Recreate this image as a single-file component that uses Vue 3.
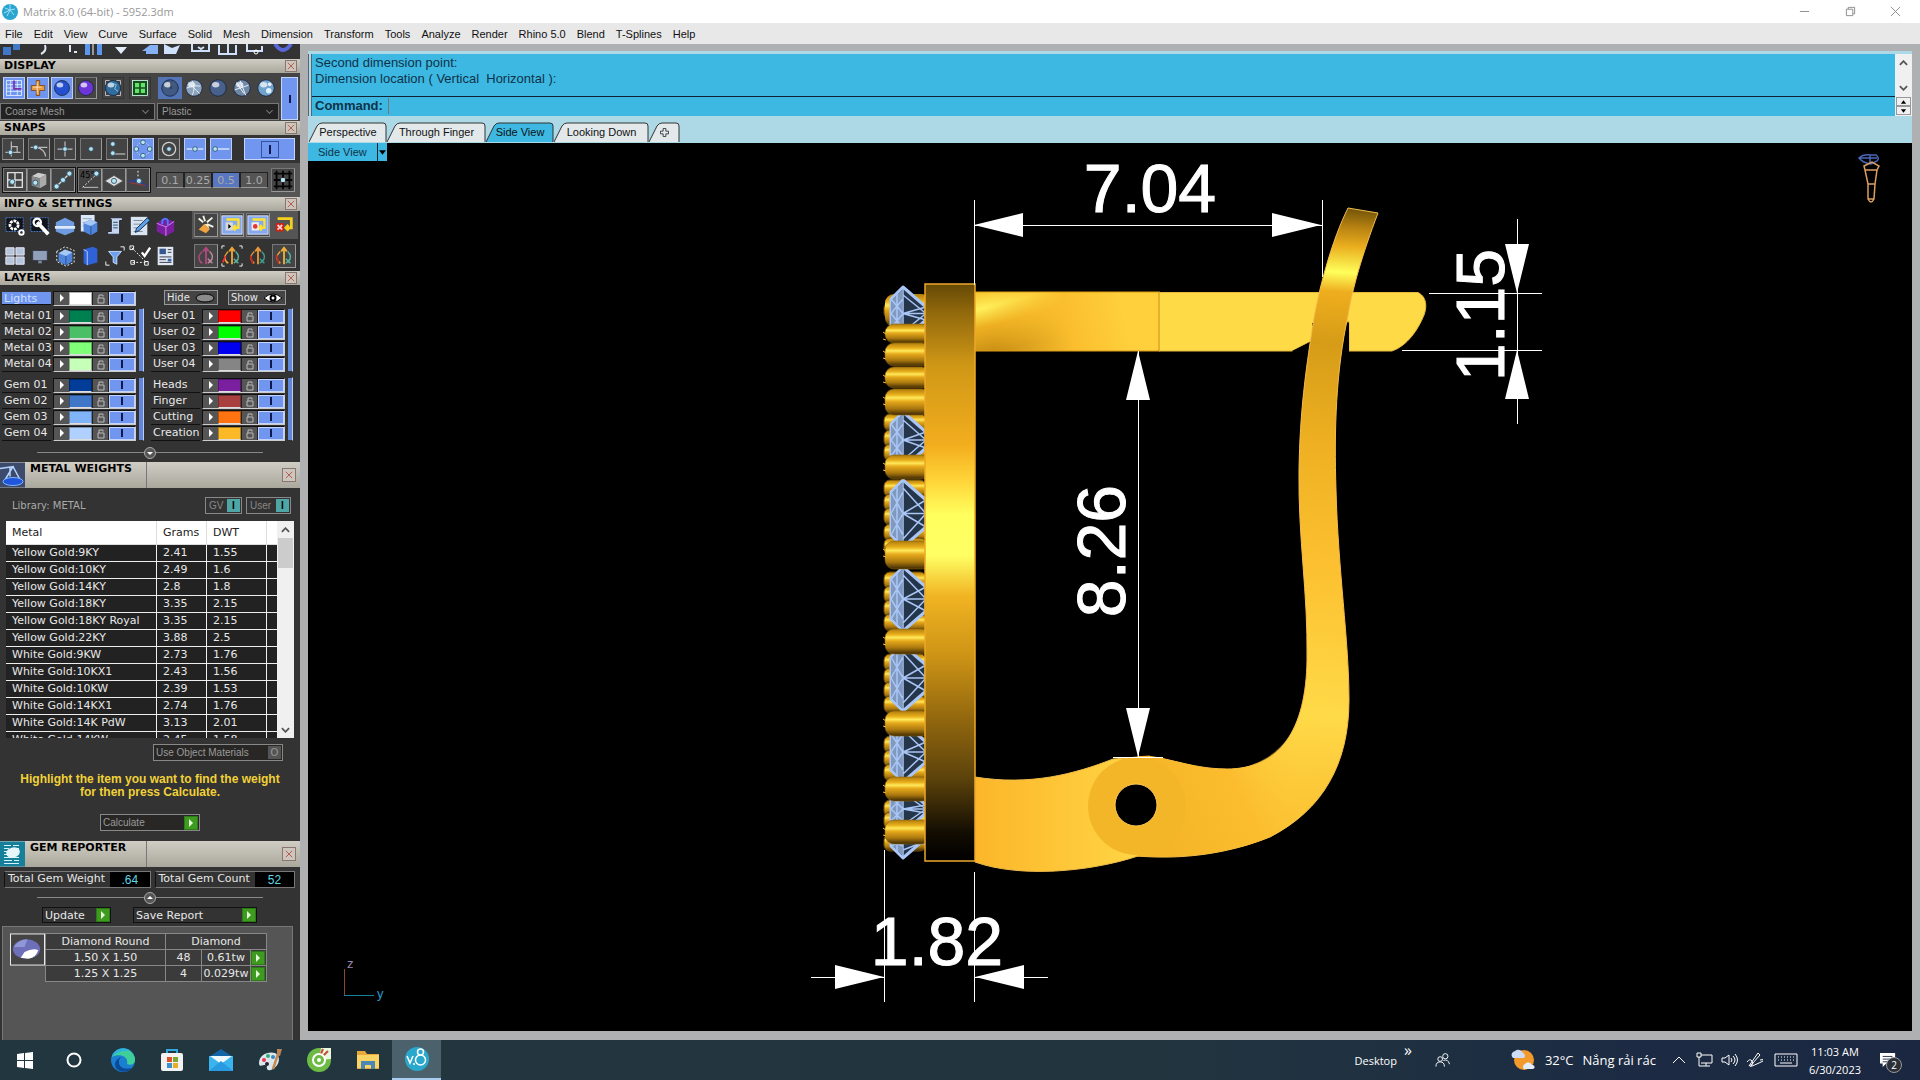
<template>
  <div class="app">
    <header class="titlebar">
      <svg class="logo" viewBox="0 0 18 18"><circle cx="9" cy="9" r="8" fill="#2aa5cf" /><path d="M4 5l5 2 5-1M6 13l3-6 4 5M3 10l6-3M9 1v6" stroke="#9fe0f5" fill="none" /></svg>
      <span class="title">Matrix 8.0 (64-bit) - 5952.3dm</span>
      <div class="window-buttons">
        <button type="button" aria-label="Minimize"><svg viewBox="0 0 12 12"><path d="M1 6h10" /></svg></button>
        <button type="button" aria-label="Restore"><svg viewBox="0 0 12 12"><path d="M1.500 3.500h7v7h-7zM3.500 3.500v-2h7v7h-2" /></svg></button>
        <button type="button" aria-label="Close"><svg viewBox="0 0 12 12"><path d="M1 1l10 10M11 1L1 11" /></svg></button>
      </div>
    </header>

    <nav class="menubar">
      <button v-for="m in menus" :key="m" type="button">{{ m }}</button>
    </nav>

    <div class="body">
      <aside class="sidebar">
        <div class="clipped-tools">
          <svg viewBox="0 0 300 15" v-html="clippedTools"></svg>
        </div>

        <!-- Display -->
        <div class="heading"><h2>DISPLAY</h2><button type="button" class="x" aria-label="Close display"><svg viewBox="0 0 10 10"><path d="M1 1l8 8M9 1L1 9" /></svg></button></div>
        <section class="display">
          <div class="display-col wide">
            <div class="display-icons">
              <button v-for="b in displayTools" :key="b.name" type="button" class="tool" :class="b.look" :aria-label="b.name"><svg viewBox="0 0 24 24" v-html="b.icon"></svg></button>
            </div>
            <select aria-label="Mesh quality"><option>Coarse Mesh</option></select>
          </div>
          <div class="display-col">
            <div class="display-icons spheres">
              <button v-for="(b, i) in spheres" :key="i" type="button" class="tool flat" :class="{ on: i === 0 }" :aria-label="'Shading ' + (i + 1)"><svg viewBox="0 0 24 24" v-html="b"></svg></button>
            </div>
            <select aria-label="Material"><option>Plastic</option></select>
          </div>
          <button type="button" class="toggle tall" aria-label="Toggle shading"></button>
        </section>

        <!-- Snaps -->
        <div class="heading"><h2>SNAPS</h2><button type="button" class="x" aria-label="Close snaps"><svg viewBox="0 0 10 10"><path d="M1 1l8 8M9 1L1 9" /></svg></button></div>
        <section class="snaps">
          <button v-for="b in snaps" :key="b.name" type="button" class="tool" :class="{ on: b.on }" :aria-label="b.name"><svg viewBox="0 0 24 24" v-html="b.icon"></svg></button>
          <button type="button" class="toggle big" aria-label="Toggle snaps"></button>
        </section>
        <section class="grid-snaps">
          <div v-for="(g, i) in gridSnaps" :key="i" class="tool-group">
            <button v-for="(b, k) in g" :key="k" type="button" class="tool" :aria-label="'Grid snap ' + (i * 3 + k + 1)"><svg viewBox="0 0 24 24" v-html="b"></svg></button>
          </div>
          <div class="steps">
            <button v-for="s in ['0.1', '0.25', '0.5', '1.0']" :key="s" type="button" :class="{ on: s === '0.5' }">{{ s }}</button>
          </div>
          <button type="button" class="tool" aria-label="Grid"><svg viewBox="0 0 24 24"><path d="M2 5h20M2 12h20M2 19h20M5 2v20M12 2v20M19 2v20" stroke="#050505" stroke-width="2" fill="none" /><circle cx="12" cy="12" r="2.500" fill="#b9e4f5" /></svg></button>
        </section>

        <!-- Info & settings -->
        <div class="heading"><h2>INFO &amp; SETTINGS</h2><button type="button" class="x" aria-label="Close settings"><svg viewBox="0 0 10 10"><path d="M1 1l8 8M9 1L1 9" /></svg></button></div>
        <section v-for="(row, i) in info" :key="i" class="info-row">
          <div class="info-left">
            <button v-for="(b, k) in row.left" :key="k" type="button" class="tool bare" :aria-label="'Setting ' + (i * 7 + k + 1)"><svg viewBox="0 0 24 24" v-html="b"></svg></button>
          </div>
          <div class="info-right" :class="{ lit: i === 0 }">
            <button v-for="(b, k) in row.right" :key="k" type="button" class="tool" :class="b.look" :aria-label="'History ' + (i * 4 + k + 1)"><svg viewBox="0 0 24 24" v-html="b.icon"></svg></button>
          </div>
        </section>

        <!-- Layers -->
        <div class="heading"><h2>LAYERS</h2><button type="button" class="x" aria-label="Close layers"><svg viewBox="0 0 10 10"><path d="M1 1l8 8M9 1L1 9" /></svg></button></div>
        <section class="layers">
          <div class="layer-block lights">
            <div class="layer">
              <span class="layer-name selected">Lights</span>
              <div class="layer-controls">
                <button type="button" class="play" aria-label="Select Lights"></button>
                <button type="button" class="swatch white" aria-label="Lights colour"></button>
                <button type="button" class="lock" aria-label="Lock Lights"><svg viewBox="0 0 10 12"><path d="M3 6V3h4v1.500M2 6h6v5H2z" /></svg></button>
                <button type="button" class="toggle" aria-label="Toggle Lights"></button>
              </div>
            </div>
            <div class="visibility">
              <button type="button">Hide <svg viewBox="0 0 20 10"><ellipse cx="10" cy="5" rx="9" ry="4" fill="#8b8b8b" stroke="#000" /></svg></button>
              <button type="button">Show <svg viewBox="0 0 20 10"><path d="M1 5q9-8 18 0q-9 8-18 0" fill="#fff" stroke="#000" /><circle cx="10" cy="5" r="2.500" fill="#fff" stroke="#000" stroke-width="2" /></svg></button>
            </div>
          </div>
          <div v-for="(block, i) in layers" :key="i" class="layer-block">
            <div v-for="(col, k) in block" :key="k" class="layer-col">
              <div>
                <div v-for="l in col" :key="l.name" class="layer">
                  <span class="layer-name">{{ l.name }}</span>
                  <div class="layer-controls">
                    <button type="button" class="play" :aria-label="'Select ' + l.name"></button>
                    <button type="button" class="swatch" :style="{ background: l.color }" :aria-label="l.name + ' colour'"></button>
                    <button type="button" class="lock" :aria-label="'Lock ' + l.name"><svg viewBox="0 0 10 12"><path d="M3 6V3h4v1.500M2 6h6v5H2z" /></svg></button>
                    <button type="button" class="toggle" :aria-label="'Toggle ' + l.name"></button>
                  </div>
                </div>
              </div>
              <span class="layer-bar"></span>
            </div>
          </div>
        </section>
        <div class="fold"><button type="button" aria-label="Expand layers"><svg viewBox="0 0 12 12"><circle cx="6" cy="6" r="5.500" fill="#555" stroke="#aaa" /><path d="M3 5h6l-3 3z" fill="#fff" /></svg></button></div>

        <!-- Metal weights -->
        <div class="heading tall-heading">
          <svg class="heading-icon" viewBox="0 0 25 25"><rect width="25" height="25" fill="#3c4a6c" /><path d="M0 6l14-2M13 4L4 19M13 4l8 15M10 4v10" stroke="#b4d4ff" fill="none" stroke-width="1.500" /><ellipse cx="13" cy="19" rx="10" ry="4" fill="#1f56dc" stroke="#7fb4ff" /></svg>
          <h2>METAL WEIGHTS</h2>
          <button type="button" class="x" aria-label="Close metal weights"><svg viewBox="0 0 10 10"><path d="M1 1l8 8M9 1L1 9" /></svg></button>
        </div>
        <section class="metals">
          <div class="library">
            <span>Library: METAL</span>
            <button type="button">GV <b>I</b></button>
            <button type="button">User <b>I</b></button>
          </div>
          <div class="metal-list">
            <table>
              <thead>
                <tr><th>Metal</th><th>Grams</th><th>DWT</th><th></th></tr>
              </thead>
              <tbody>
                <tr v-for="m in metals" :key="m[0]"><td>{{ m[0] }}</td><td>{{ m[1] }}</td><td>{{ m[2] }}</td><td></td></tr>
              </tbody>
            </table>
            <div class="scroll">
              <svg viewBox="0 0 10 6"><path d="M1 5l4-4 4 4" /></svg>
              <span class="thumb"></span>
              <svg viewBox="0 0 10 6"><path d="M1 1l4 4 4-4" /></svg>
            </div>
          </div>
          <button type="button" class="field-button materials">Use Object Materials <i>O</i></button>
          <p class="hint">Highlight the item you want to find the weight<br>for then press Calculate.</p>
          <button type="button" class="field-button calculate">Calculate <span class="go"></span></button>
        </section>

        <!-- Gem reporter -->
        <div class="heading tall-heading">
          <svg class="heading-icon" viewBox="0 0 25 25"><rect width="25" height="25" fill="#167f9a" /><path d="M4 4h7M13 4h6M4 7h5M11 7h8M4 10h15M4 13h15M4 16h15M4 19h8M14 19h5M4 22h15" stroke="#d7f4fb" /><ellipse cx="13" cy="11" rx="7" ry="5" fill="#e6f6fa" transform="rotate(-15 13 11)" /></svg>
          <h2>GEM REPORTER</h2>
          <button type="button" class="x" aria-label="Close gem reporter"><svg viewBox="0 0 10 10"><path d="M1 1l8 8M9 1L1 9" /></svg></button>
        </div>
        <section class="gems">
          <div class="totals">
            <div><span>Total Gem Weight</span><output>.64</output></div>
            <div><span>Total Gem Count</span><output>52</output></div>
          </div>
          <div class="fold"><button type="button" aria-label="Collapse totals"><svg viewBox="0 0 12 12"><circle cx="6" cy="6" r="5.500" fill="#555" stroke="#aaa" /><path d="M3 7h6L6 4z" fill="#fff" /></svg></button></div>
          <div class="gem-actions">
            <button type="button" class="update"><span>Update</span><span class="go"></span></button>
            <button type="button" class="save"><span>Save Report</span><span class="go"></span></button>
          </div>
          <div class="report">
            <svg class="gem-thumb" viewBox="0 0 36 33"><rect x="0.500" y="0.500" width="35" height="32" fill="#444" stroke="#eee" /><ellipse cx="17" cy="16" rx="14" ry="10" fill="#6d70b8" /><path d="M4 14q5-8 14-8l-3 8z" fill="#8f97d8" /><path d="M11 25l4-6q8-4 14-2-2 8-10 9z" fill="#fff" /></svg>
            <table>
              <thead><tr><th>Diamond Round</th><th colspan="3">Diamond</th></tr></thead>
              <tbody>
                <tr v-for="g in gems" :key="g[0]">
                  <td>{{ g[0] }}</td><td>{{ g[1] }}</td><td>{{ g[2] }}</td>
                  <td><button type="button" class="go" :aria-label="'Show ' + g[0]"></button></td>
                </tr>
              </tbody>
            </table>
          </div>
        </section>
      </aside>

      <main class="workspace">
        <section class="command">
          <div class="command-text">
            <p>Second dimension point:</p>
            <p>Dimension location ( Vertical&nbsp; Horizontal ):</p>
            <label class="prompt">Command: <input type="text"></label>
          </div>
          <div class="command-scroll">
            <div class="command-arrows">
              <svg viewBox="0 0 10 6"><path d="M1 5l4-4 4 4" /></svg>
              <svg viewBox="0 0 10 6"><path d="M1 1l4 4 4-4" /></svg>
            </div>
            <button type="button" aria-label="Previous"><svg viewBox="0 0 8 4"><path d="M1 4l3-4 3 4z" /></svg></button>
            <button type="button" aria-label="Next"><svg viewBox="0 0 8 4"><path d="M1 0l3 4 3-4z" /></svg></button>
          </div>
        </section>

        <div class="tabs">
          <button v-for="t in tabs" :key="t.name" type="button" :class="{ active: t.name === 'Side View' }">
            <svg :viewBox="`0 0 ${t.width} 20`" :width="t.width" height="20"><path :d="`M0 20L8 4q2-3 5-3H${t.width - 4}q3 0 3 3V20`" /></svg>
            <span v-if="t.name !== '+'">{{ t.name }}</span>
            <svg v-else class="plus" viewBox="0 0 10 10"><path d="M3.500 .5h3v3h3v3h-3v3h-3v-3h-3v-3h3z" /></svg>
          </button>
        </div>

        <section class="viewport">
          <button type="button" class="view-label">Side View<span><svg viewBox="0 0 8 5"><path d="M0 0h8L4 5z" /></svg></span></button>
          <svg class="scene" viewBox="308 143 1604 888">
            <defs>
              <linearGradient id="bezel" x2="0" y2="1">
                <stop offset="0" stop-color="#654905" /><stop offset=".05" stop-color="#92690c" /><stop offset=".14" stop-color="#cf9716" />
                <stop offset=".28" stop-color="#f3ae1e" /><stop offset=".34" stop-color="#ffd438" /><stop offset=".4" stop-color="#ffff5e" />
                <stop offset=".47" stop-color="#ffff64" /><stop offset=".54" stop-color="#f1b423" /><stop offset=".64" stop-color="#cf9516" />
                <stop offset=".75" stop-color="#94690e" /><stop offset=".86" stop-color="#5a410b" /><stop offset=".95" stop-color="#130d02" /><stop offset="1" stop-color="#000" />
              </linearGradient>
              <linearGradient id="prong" x2="0" y2="1">
                <stop offset="0" stop-color="#b07c0d" /><stop offset=".22" stop-color="#e9b01c" /><stop offset=".34" stop-color="#ffe95a" />
                <stop offset=".48" stop-color="#e6a91b" /><stop offset=".75" stop-color="#aa780f" /><stop offset="1" stop-color="#3d2903" />
              </linearGradient>
              <linearGradient id="post" gradientUnits="userSpaceOnUse" x1="985" y1="292" x2="1000" y2="351">
                <stop offset="0" stop-color="#f9c934" /><stop offset=".25" stop-color="#fff05a" /><stop offset=".55" stop-color="#eeb022" /><stop offset="1" stop-color="#c98f14" />
              </linearGradient>
              <linearGradient id="post-end" gradientUnits="userSpaceOnUse" x1="990" y1="330" x2="1120" y2="300">
                <stop offset="0" stop-color="#f9bd2c" stop-opacity="0" /><stop offset=".6" stop-color="#fbbf2e" /><stop offset="1" stop-color="#ffcf3c" />
              </linearGradient>
              <linearGradient id="arm" x2="1" y2="0"><stop offset="0" stop-color="#fcb62a" /><stop offset="1" stop-color="#ffd746" /></linearGradient>
              <linearGradient id="lever" gradientUnits="userSpaceOnUse" x1="1360" y1="208" x2="1320" y2="860">
                <stop offset="0" stop-color="#6d5208" /><stop offset=".03" stop-color="#b78212" /><stop offset=".06" stop-color="#eaae1e" />
                <stop offset=".1" stop-color="#ffff5c" /><stop offset=".13" stop-color="#eead1e" /><stop offset=".21" stop-color="#d69c17" />
                <stop offset=".36" stop-color="#eeb022" /><stop offset=".55" stop-color="#fcc030" /><stop offset=".78" stop-color="#ffda48" /><stop offset=".93" stop-color="#fbc031" /><stop offset="1" stop-color="#f6b829" />
              </linearGradient>
              <linearGradient id="fade" gradientUnits="userSpaceOnUse" x1="1150" y1="810" x2="1310" y2="740">
                <stop offset="0" stop-color="#f4b528" /><stop offset=".5" stop-color="#fbbc2e" /><stop offset="1" stop-color="#ffd744" stop-opacity="0" />
              </linearGradient>
            </defs>

            <!-- stone setting, back row then front row -->
            <rect v-for="y in backProngs" :key="'b' + y" x="884" :y="y" width="42" height="17" rx="6" fill="url(#prong)" stroke="#6a4a08" />
            <rect x="885" y="294" width="46" height="33" rx="9" fill="url(#prong)" />
            <g v-for="g in stones" :key="'s' + g[0]" fill="none" stroke="#a9c6f7" stroke-width="3" stroke-linejoin="round">
              <path :d="stoneOutline(g)" fill="#26364a" />
              <path :d="stoneTable(g)" fill="#8199bd" stroke="none" />
              <path :d="stoneFacets(g)" stroke-width="1.500" />
            </g>
            <g v-for="p in prongs" :key="'p' + p[0]">
              <rect x="885" :y="p[0]" width="46" :height="p[1] - p[0]" rx="9" fill="url(#prong)" stroke="#8a610a" stroke-width=".6" />
              <path :d="`M883 ${p[0] + 8}l3 2M883 ${p[0] + 15}l3 1`" stroke="#f9bf2b" />
            </g>

            <path d="M975 292H1159V351H975z" fill="url(#post)" />
            <path d="M975 292H1159V351H975z" fill="url(#post-end)" />
            <path d="M1159 292.500H1418C1427 297 1427 307 1424 315C1418 330 1407 346 1392 351H1349V321L1292 351H1159z" fill="#ffda47" stroke="#e7b83e" />
            <path d="M1292 351L1312 341V323H1349V351z" fill="#000" />
            <path d="M1159 292V351M975 292H1160M975 351H1160" stroke="#d99b18" fill="none" />
            <path d="M975 777C1030 786 1075 774 1113 759L1150 756V855L1138 856C1090 872 1020 878 975 862z" fill="url(#arm)" stroke="#efbb49" />
            <path :d="lever" fill="url(#lever)" stroke="#f5bd4b" />
            <path d="M1137 757C1160 753 1187 769 1227 769C1260 769 1285 748 1295 725L1348 725C1345 770 1320 812 1270 837C1235 852 1190 859 1137 856z" fill="url(#fade)" />
            <circle cx="1137" cy="806" r="49" fill="#f4b629" />
            <circle cx="1136" cy="805" r="21" fill="#000" stroke="#ffc955" />
            <rect x="925" y="284" width="50" height="577" fill="url(#bezel)" stroke="#eda829" stroke-width="1.500" />

            <g class="dims">
              <path d="M974.500 200V285M1322.500 200V277M974 225.500H1322M1517.500 219V424M1429 293.500H1542M1402 350.500H1542M1138.500 351V757M1113 757.500H1163M884.500 850V1002M974.500 872V1002M811 977.500H885M975 977.500H1048" />
              <path class="arrow" d="M974 225l49-12v24zM1321 225l-49-12v24zM1517 293l-12-49h24zM1517 350l-12 49h24zM1138 351l-12 49h24zM1138 757l-12-49h24zM884 977l-49-12v24zM975 977l49-12v24z" />
              <text x="1150" y="212">7.04</text>
              <text x="937" y="965">1.82</text>
              <text transform="translate(1125 551) rotate(-90)">8.26</text>
              <text transform="translate(1504 315) rotate(-90)">1.15</text>
            </g>

            <path d="M344.500 969V995" stroke="#8a4a2c" fill="none" />
            <path d="M344 995.500H374" stroke="#1c7f9c" fill="none" />
            <text class="axis" x="347" y="968" fill="#9a86b0">z</text>
            <text class="axis" x="377" y="998" fill="#2a9bd0">y</text>

            <g fill="none" stroke-width="1.500">
              <path d="M1859 158q4-4 12-3h5q4 3 1 6l-6 3q-8-1-12-6zM1860 158h17M1870 155v8" stroke="#4a66b8" />
              <path d="M1864 166l8-4 7 4-2 4-2 14-1 15q-3 6-6 0v-15l-3-14zM1865 170h12M1868 184h7M1868 199h6M1864 166l1 4" stroke="#dc9f60" />
            </g>
          </svg>
        </section>
      </main>
    </div>

    <footer class="taskbar">
      <div class="pinned">
        <button v-for="a in apps" :key="a.name" type="button" :class="{ running: a.name === 'Matrix' }" :aria-label="a.name"><svg viewBox="0 0 24 24" v-html="a.icon"></svg></button>
      </div>
      <div class="tray">
        <span class="desktop">Desktop</span>
        <span class="more">»</span>
        <svg class="people" viewBox="0 0 16 16"><circle cx="5.500" cy="7" r="2.500" /><circle cx="11" cy="4" r="2.800" /><path d="M1 15q0-5 4.500-5t4.500 5M9 8.500q5-2 6.500 4" /></svg>
        <div class="weather">
          <svg viewBox="0 0 26 26"><circle cx="14" cy="13" r="10" fill="#f39a2d" /><path d="M3 11a4 4 0 0 1 2-7 5 5 0 0 1 8 2 3 3 0 0 1 1 5z" fill="#cfdcf5" /><path d="M14 22a3 3 0 0 1 1-5 4 4 0 0 1 7 1 2 2 0 0 1 1 4z" fill="#e3ecfa" /></svg>
          <span>32°C</span><span>Nắng rải rác</span>
        </div>
        <div class="status">
          <svg viewBox="0 0 18 18"><path d="M3 12l6-6 6 6" /></svg>
          <svg viewBox="0 0 18 18"><path d="M6 4h11v8H6M11 12v3M7 15h8M2 2h4v4H2zM4 6v9h3" /></svg>
          <svg viewBox="0 0 18 18"><path d="M2 7v4h3l4 3V4L5 7zM11 7q2 2 0 4M13 5q4 4 0 8M15 3q5 6 0 12" /></svg>
          <svg viewBox="0 0 18 18"><path d="M6 12L13 2l2 2-8 9-3 2zM2 11q3-4 5-1t-1 5 8-3 1-3" /></svg>
          <svg class="keyboard" viewBox="0 0 24 14"><path d="M1 1h22v12H1zM4 4h1M7 4h1M10 4h1M13 4h1M16 4h1M19 4h1M4 7h1M7 7h1M10 7h1M13 7h1M16 7h1M19 7h1M6 10h12" /></svg>
        </div>
        <div class="clock"><time>11:03 AM</time><time>6/30/2023</time></div>
        <button type="button" class="notify" aria-label="Notifications">
          <svg viewBox="0 0 20 18"><path d="M1 1h17v12H8l-4 4v-4H1z" fill="#fff" /><path d="M4 5h11M4 8h11M4 11h6" stroke="#1b2740" /></svg>
          <span>2</span>
        </button>
      </div>
    </footer>
  </div>
</template>

<script setup>
const menus = ['File', 'Edit', 'View', 'Curve', 'Surface', 'Solid', 'Mesh', 'Dimension', 'Transform', 'Tools', 'Analyze', 'Render', 'Rhino 5.0', 'Blend', 'T-Splines', 'Help']

const tabs = [
  { name: 'Perspective', width: 78 },
  { name: 'Through Finger', width: 99 },
  { name: 'Side View', width: 68 },
  { name: 'Looking Down', width: 95 },
  { name: '+', width: 31 }
]

const clippedTools = `
  <path d="M3 3h8v8H3zM13 0h7v6h-7z" fill="#3f78c8"/><path d="M45 1q2 6-4 9M70 1v7M74 8h3" stroke="#dfe8f5" fill="none" stroke-width="2"/>
  <path d="M85 0h5v11h-5zM97 0h5v11h-5z" fill="#5b97ee"/><path d="M93 0v11" stroke="#fff"/><path d="M115 3h12l-6 7z" fill="#e3ecfa"/>
  <path d="M142 7l8-6h8v6zM146 6h12v4h-12z" fill="#86b1f6"/><path d="M164 0l8 4 8-3-4 9h-12z" fill="#cfe0fa"/>
  <path d="M192 0v7h17V0M198 3l3 2 3-2M219 1v9h17V1M228 0v11M247 0v7h15V2" stroke="#cfe0fa" fill="none" stroke-width="2"/>
  <circle cx="256" cy="8" r="2" stroke="#fff" fill="none"/><path d="M275 0q8 12 16 0" stroke="#5968d8" stroke-width="4" fill="none"/>`

// A shaded ball, used by the display and shading buttons
const ball = (c, extra = '') => `<circle cx="12" cy="12" r="9" fill="${c}" stroke="#1c2a44"/><ellipse cx="9.500" cy="8.500" rx="4" ry="3" fill="#fff" opacity=".7"/>${extra}`

const displayTools = [
  { name: 'Grid', look: 'on', icon: '<path d="M3 3h18v18H3zM3 8h18M3 12h18M3 16h18M8 3v18M16 3v18" stroke="#e6f0ff" fill="none"/><path d="M12 3v10h9" stroke="#7a2fae" fill="none" stroke-width="2"/>' },
  { name: 'Move', look: 'on', icon: '<path d="M10 3h4v6h6v6h-6v6h-4v-6H4V9h6z" fill="#e69a45" stroke="#7b4310"/><path d="M11 5v14M6 11h10" stroke="#ffe7bf"/>' },
  { name: 'Shaded', look: 'on', icon: ball('#2450d0') },
  { name: 'Rendered', look: '', icon: ball('#6b35d8') },
  { name: 'Globe', look: 'gap', icon: ball('#2f6d9c', '<path d="M3 3h5M3 3v5M21 3h-5M21 3v5M3 21h5M3 21v-5M21 21h-5M21 21v-5" stroke="#ccc"/><path d="M10 6l6 2-2 5 4 3" stroke="#9dd2f0" fill="none"/>') },
  { name: 'Windows', look: 'gap', icon: '<rect x="3" y="3" width="18" height="18" fill="#164f1c" stroke="#cfe"/><path d="M6 6h5v5H6zM13 6h5v5h-5zM6 13h5v5H6zM13 13h5v5h-5z" fill="#63e36b"/>' }
]

const spheres = [
  ball('#405a84', '<path d="M13 6v7" stroke="#222"/>'),
  ball('#8ba3bd', '<path d="M6 6l12 12M4 12q8-4 15-2M10 4q4 8 0 16" stroke="#e7f0fa" fill="none"/>'),
  ball('#47608c'),
  ball('#6f88a6', '<path d="M10 4l6 16M4 14l15-5M6 6l8 12" stroke="#f2f8ff" fill="none"/>'),
  ball('#6fa3cc', '<circle cx="15" cy="15" r="3" fill="#dff1ff"/><circle cx="16" cy="8" r="2" fill="#eef"/>')
]

const dot = (x, y) => `<circle cx="${x}" cy="${y}" r="2.800" fill="#b5e4f5" stroke="#32566b"/>`
const line = (d, c = '#b9b9b9') => `<path d="${d}" stroke="${c}" stroke-width="1.500" fill="none"/>`

const snaps = [
  { name: 'Perpendicular', icon: line('M10 3v18M3 16h18M10 9h7v7') + dot(9, 16) },
  { name: 'Tangent', icon: line('M2 10h20M9 10q10 2 11 11') + dot(8, 10) },
  { name: 'Intersection', icon: line('M12 3v18M3 12h18') + dot(12, 12) },
  { name: 'Point', icon: dot(12, 12) },
  { name: 'Near', icon: line('M8 18h14') + dot(7, 6) + dot(7, 17) },
  { name: 'Quad', on: true, icon: '<circle cx="12" cy="12" r="8" stroke="#dce9ff" stroke-dasharray="2 2" fill="none"/>' + dot(12, 4) + dot(12, 20) + dot(4, 12) + dot(20, 12) },
  { name: 'Center', icon: '<circle cx="12" cy="12" r="8" stroke="#d0d0d0" stroke-width="1.500" fill="none"/>' + dot(12, 12) },
  { name: 'Mid', on: true, icon: line('M2 12h20', '#e8f0ff') + dot(12, 12) },
  { name: 'End', on: true, icon: line('M5 12h17', '#e8f0ff') + dot(5, 12) }
]

const gridSnaps = [
  [
    line('M4 4h16v16H4zM12 4v16M4 12h16', '#ddd') + dot(9, 14),
    '<path d="M4 8l7-4 9 2-7 4z" fill="#ccc"/><path d="M4 8l9 2v11l-9-3z" fill="#888"/><path d="M13 10l7-4v11l-7 4z" fill="#aaa"/>' + dot(8, 15),
    line('M4 20L20 4', '#ddd') + dot(5, 19) + dot(12, 12) + dot(19, 5)
  ],
  [
    '<text x="1" y="10" font-size="9" font-family="DejaVu Sans" fill="#000">45°</text><path d="M4 20L20 5" stroke="#fff" stroke-dasharray="2 2"/><path d="M5 20h16" stroke="#ccc"/>' + dot(19, 5),
    '<path d="M2 13l10-6 10 6-10 6z" fill="#ddd" stroke="#555"/>' + dot(12, 13),
    '<path d="M12 2v12" stroke="#fff" stroke-dasharray="2 2"/><path d="M2 14l10-2 10 7" stroke="#2c3f9a" fill="none" stroke-width="2"/><path d="M3 15l17 3" stroke="#a33"/>' + dot(13, 13)
  ]
]

const book = '<path d="M5 5l10-3 5 2v15l-11 3-4-2z" fill="#2f62d8"/><path d="M5 5l4 2v15" stroke="#b8d0ff" fill="none"/>'
const cube = '<path d="M5 9l7-4 8 3v10l-7 4-8-4z" fill="#4f86dc"/><path d="M5 9l8 3 7-4-8-3z" fill="#a7c7f5"/><path d="M13 12v10" stroke="#274c94"/>'
const loop = (x) => `<rect x="1" y="2" width="22" height="20" fill="#86a9ee" stroke="#dde7ff"/><path d="M6 6h13v9h-5m2-3l-3 3 3 3" stroke="#ffe12e" stroke-width="2.500" fill="none"/>${x}`
const history = (a, b, extra = '') => `<path d="M12 21V4M9 7l3-4 3 4" stroke="${a}" stroke-width="2" fill="none"/><path d="M8 7q-7 6-1 13M5 17l3 3" stroke="${a}" stroke-width="1.500" fill="none"/><path d="M16 7q6 6 0 12M14 15l5 5M19 15l-5 5" stroke="${b}" stroke-width="1.500" fill="none"/>${extra}`

const info = [
  {
    left: [
      '<path d="M2 3h19v15H2z" fill="#10131c" stroke="#4d7fcc" stroke-dasharray="2 1"/><circle cx="11" cy="11" r="4.500" fill="none" stroke="#fff" stroke-width="3" stroke-dasharray="3 1"/><circle cx="19" cy="19" r="2.500" fill="none" stroke="#fff" stroke-width="2"/>',
      '<path d="M2 3h19v15H2z" fill="#10131c" stroke="#4d7fcc" stroke-dasharray="2 1"/><path d="M9 8l12 13" stroke="#fff" stroke-width="4"/><circle cx="9" cy="8" r="4" fill="none" stroke="#fff" stroke-width="2.500"/>',
      '<path d="M2 8l10-5 10 5v10l-10 4-10-4z" fill="#6f9ce0"/><path d="M1 12h22v3H1z" fill="#dde9fb"/>',
      '<path d="M2 0h15v18H2z" fill="#dce8fa"/><path d="M4 4h10M4 8h10M4 12h8" stroke="#8aa"/>' + cube,
      '<path d="M6 3h14v3h-3v15H4v-3h4V5z" fill="#c5d6ee" stroke="#223"/><path d="M10 8h5M10 11h5M10 14h5" stroke="#246"/>',
      '<path d="M2 2h18v20H2z" fill="#d8e4f0"/><path d="M5 6h10M5 10h8M5 14h6M5 18h10" stroke="#789"/><path d="M20 3l3 3-12 11-4 2 1-4z" fill="#5fa1e8" stroke="#124"/>',
      '<path d="M3 9l8-6 11 4v11l-9 5-10-5z" fill="#7a1fa0"/><path d="M3 9l10 4v10M13 13l9-6" stroke="#d38af0" fill="none"/><path d="M9 10V6q4-4 6 0v5" stroke="#4a7cff" fill="none" stroke-width="2"/>'
    ],
    right: [
      { look: 'boxed', icon: '<path d="M4 17l6-6 6 6-4 4z" fill="#f0a33e"/><path d="M10 11h4l2 6" fill="#ffe3a0"/><path d="M9 9L4 5M11 8L9 2M13 9l6-5M13 11l7 3" stroke="#f4f4e8" stroke-width="2"/>' },
      { look: 'boxed', icon: loop('<path d="M5 9h8v9H5z" fill="#d8d8d8"/><path d="M8 11l3 2.500-3 2.500z"/>') },
      { look: 'boxed', icon: loop('<path d="M5 9h8v9H5z" fill="#eee"/><circle cx="9" cy="13.500" r="2.500" fill="#e33"/>') },
      { look: 'bare', icon: '<path d="M5 5h15v10h-5m2-3l-3 3 3 3" stroke="#f7cf1d" stroke-width="3" fill="none"/><rect x="3" y="10" width="9" height="9" fill="#c21"/><path d="M5 12l5 5M10 12l-5 5" stroke="#fcc" stroke-width="2"/>' }
    ]
  },
  {
    left: [
      '<path d="M2 3h9v8H2zM13 3h9v8h-9zM2 13h9v8H2zM13 13h9v8h-9z" fill="#b7c5da" stroke="#eef"/>',
      '<path d="M4 6h16v11H4z" fill="#8fa0b8" stroke="#334"/><path d="M10 17h4v3h-4z" fill="#789"/>',
      cube + '<path d="M3 7l9-5 10 4v13l-9 4-10-5z" fill="none" stroke="#fff" stroke-dasharray="2 2"/>',
      book,
      '<path d="M5 7h14l-5 6v8l-4-2v-6z" fill="#6fa2ee" stroke="#cfe0ff"/><path d="M18 2h4v4M2 18v4h4" stroke="#fff" fill="none"/>',
      '<path d="M3 3l8 8M4 19h15M11 11l9 9" stroke="#fff" stroke-dasharray="2 2"/><path d="M14 8l3 4 6-9" stroke="#fff" stroke-width="2.500" fill="none"/><path d="M1 1h4v4H1zM2 17h4v4H2zM17 18h4v4h-4z" fill="none" stroke="#fff"/>',
      '<path d="M4 2h17v20H4z" fill="#dfe7f2"/><path d="M6 4h7v6H6z" fill="#36568f"/><path d="M15 5h4M15 8h4M6 13h13M6 16h7M6 19h13" stroke="#334"/><path d="M15 15h4v3h-4z" fill="#36a"/>'
    ],
    right: [
      { look: 'boxed', icon: history('#b3487d', '#c08aa0') },
      { look: 'bare', icon: history('#f0a73a', '#5bb3a0', '<path d="M1 4V1h3M20 1h3v3M1 20v3h3M20 23h3v-3" stroke="#fff" fill="none"/><path d="M5 12l-3 7" stroke="#e33" stroke-width="2"/>') },
      { look: 'bare', icon: history('#e8973a', '#3f9d8e', '<path d="M4 12l2 8" stroke="#c22" stroke-width="2"/>') },
      { look: 'boxed', icon: history('#f0b03a', '#55b5a5', '<path d="M4 11l2 9" stroke="#c22" stroke-width="2"/>') }
    ]
  }
]

const layer = (name, color) => ({ name, color })
const layers = [
  [
    [layer('Metal 01', '#008051'), layer('Metal 02', '#4abf66'), layer('Metal 03', '#80ff78'), layer('Metal 04', '#c5ffb8')],
    [layer('User 01', '#ff0000'), layer('User 02', '#00ff00'), layer('User 03', '#0000ee'), layer('User 04', '#858585')]
  ],
  [
    [layer('Gem 01', '#003c98'), layer('Gem 02', '#4076c8'), layer('Gem 03', '#80b4f8'), layer('Gem 04', '#b0d0ff')],
    [layer('Heads', '#7a1fa0'), layer('Finger', '#a84040'), layer('Cutting', '#ff7410'), layer('Creation', '#fbb827')]
  ]
]

const metals = [
  ['Yellow Gold:9KY', '2.41', '1.55'],
  ['Yellow Gold:10KY', '2.49', '1.6'],
  ['Yellow Gold:14KY', '2.8', '1.8'],
  ['Yellow Gold:18KY', '3.35', '2.15'],
  ['Yellow Gold:18KY Royal', '3.35', '2.15'],
  ['Yellow Gold:22KY', '3.88', '2.5'],
  ['White Gold:9KW', '2.73', '1.76'],
  ['White Gold:10KX1', '2.43', '1.56'],
  ['White Gold:10KW', '2.39', '1.53'],
  ['White Gold:14KX1', '2.74', '1.76'],
  ['White Gold:14K PdW', '3.13', '2.01'],
  ['White Gold:14KW', '2.45', '1.58']
]

const gems = [
  ['1.50 X 1.50', '48', '0.61tw'],
  ['1.25 X 1.25', '4', '0.029tw']
]

// Top and bottom of each front prong and stone
const prongs = [[324, 343], [343, 366], [367, 388], [389, 415], [455, 479], [541, 569], [629, 654], [711, 736], [777, 801], [820, 844]]
const stones = [[287, 340], [412, 468], [480, 547], [567, 631], [645, 711], [722, 782], [785, 833], [824, 858]]
const backProngs = [302, 414, 430, 444, 480, 494, 508, 524, 538, 572, 586, 600, 614, 654, 668, 682, 696, 736, 750, 764, 800, 812, 834]

const stoneOutline = ([a, b]) => `M903 ${a}L891 ${a + 12}V${b - 12}L903 ${b}L926 ${b - 20}V${a + 20}z`
const stoneTable = ([a, b]) => `M902 ${a + 3}L891 ${a + 14}V${b - 14}L902 ${b - 3}z`
const stoneFacets = ([a, b]) => {
  const m = (a + b) / 2
  return `M903 ${a}V${b}M891 ${a + 12}L903 ${m}L891 ${b - 12}M891 ${m}L903 ${a + 12}M891 ${m}L903 ${b - 12}M903 ${a + 8}L926 ${m}L903 ${b - 8}M903 ${m}H926M903 ${m}L926 ${a + 20}M903 ${m}L926 ${b - 20}M897 ${a + 6}V${b - 6}`
}

const lever = 'M1348 208L1378 213C1362 255 1352 290 1348 316C1336 370 1334 430 1336 490C1338 570 1349 640 1349 700C1349 765 1322 810 1270 837C1230 853 1185 860 1137 856V757C1160 753 1187 769 1227 769C1280 769 1306 730 1307 660C1308 590 1298 540 1299 470C1300 410 1306 370 1312 330C1318 290 1332 240 1348 208z'

const apps = [
  { name: 'Start', icon: '<path d="M4 6l7-1v7H4zM12 5l8-1v8h-8zM4 13h7v7l-7-1zM12 13h8v8l-8-1z" fill="#fff"/>' },
  { name: 'Search', icon: '<circle cx="12" cy="12" r="6.500" stroke="#fff" stroke-width="2" fill="none"/>' },
  { name: 'Edge', icon: '<circle cx="12" cy="12" r="12" fill="#1a7fd0"/><path d="M1 9C4-2 20-3 24 10c1 5-3 8-8 6 2-8-8-11-15-7z" fill="#3fcf9b"/><path d="M1 9C3 1 14-2 19 3 12 2 6 4 1 9z" fill="#2eb3dd"/><path d="M8 13c-1 6 5 9 13 7-4 5-12 5-16 0-2-4-1-9 6-11-2 1-3 2-3 4z" fill="#0c4a98"/>' },
  { name: 'Store', icon: '<path d="M7 6V2h10v4" stroke="#2ea9e0" stroke-width="2" fill="none"/><rect x="1" y="5" width="22" height="18" rx="2" fill="#f2f2f2"/><path d="M7 9h5v5H7z" fill="#e2502b"/><path d="M13 9h5v5h-5z" fill="#7ba832"/><path d="M7 15h5v5H7z" fill="#3a93cf"/><path d="M13 15h5v5h-5z" fill="#e8ac25"/>' },
  { name: 'Mail', icon: '<path d="M0 9l12-8 12 8z" fill="#1266a8"/><path d="M0 8h24v15H0z" fill="#39b4ee"/><path d="M1 8h22l-11 8z" fill="#eef8ff"/><path d="M0 23l12-10 12 10z" fill="#2a9ae0"/>' },
  { name: 'Paint', icon: '<path d="M1 15C1 7 10 3 17 5c6 3 5 12-2 16-5 3-7 0-6-3-2-3-8 3-8-3z" fill="#dbe7ec"/><circle cx="6" cy="12" r="2" fill="#e35"/><circle cx="10" cy="8" r="2" fill="#3a7"/><circle cx="15" cy="9" r="2" fill="#38c"/><circle cx="9" cy="16" r="2" fill="#223"/><path d="M21 3l-6 18" stroke="#c58a52" stroke-width="2.500"/><path d="M19 1l5 0-2 7-3-1z" fill="#b98257"/>' },
  { name: 'Coc Coc', icon: '<circle cx="12" cy="12" r="12" fill="#6dbb45"/><path d="M12 12L14 0l10 0v11z" fill="#e9f7dc"/><path d="M13 8l3-7M15 9l6-6" stroke="#c14a3a" stroke-width="2"/><circle cx="12" cy="12" r="6" fill="#6dbb45" stroke="#fff" stroke-width="2"/><circle cx="12" cy="12" r="2" fill="#fff"/>' },
  { name: 'Explorer', icon: '<path d="M1 3h8l2 3h12v15H1z" fill="#e9a93a"/><path d="M1 7h22v13H1z" fill="#fcd365"/><path d="M5 13h14v8h-4v-4H9v4H5z" fill="#4a87b5"/>' },
  { name: 'Matrix', icon: '<circle cx="12" cy="12" r="12" fill="#29a8cc"/><path d="M2 9l3 7 3-7" stroke="#fff" fill="none" stroke-width="1.500"/><circle cx="15.500" cy="13" r="5" stroke="#fff" fill="none" stroke-width="1.500"/><circle cx="15.500" cy="5" r="3" stroke="#fff" fill="none" stroke-width="1.500"/><circle cx="9" cy="17" r="1" fill="#fff"/>' }
]
</script>

<style>
body {
  margin: 0;
  overflow: hidden;
}
</style>

<style scoped>
.app {
  display: flex;
  flex-direction: column;
  height: 100vh;
  background: #333;
  color: #e8e8e8;
  font-family: "DejaVu Sans", sans-serif;
  font-size: 11px;
}

.app * {
  box-sizing: border-box;
}

button {
  margin: 0;
  padding: 0;
  border: 0;
  background: none;
  color: inherit;
  font: inherit;
}

svg {
  display: block;
  flex: none;
}

/* Window chrome */
.titlebar {
  display: flex;
  align-items: center;
  height: 23px;
  flex: none;
  padding-left: 1px;
  background: #fff;
  color: #999;
  font-family: "Open Sans", sans-serif;
}

.logo {
  width: 18px;
  height: 18px;
  margin-right: 4px;
}

.window-buttons {
  display: flex;
  margin-left: auto;
}

.window-buttons button {
  display: flex;
  align-items: center;
  justify-content: center;
  width: 46px;
  height: 20px;
}

.window-buttons button:last-child {
  width: 44px;
  margin-right: 3px;
}

.window-buttons svg {
  width: 11px;
  height: 11px;
  fill: none;
  stroke: #888;
}

.menubar {
  display: flex;
  align-items: center;
  gap: 11px;
  height: 21px;
  flex: none;
  padding-left: 5px;
  background: #e8e8e8;
  color: #111;
  font-family: "Liberation Sans", sans-serif;
}

.body {
  display: flex;
  flex: 1;
  min-height: 0;
}

/* Sidebar */
.sidebar {
  width: 300px;
  flex: none;
  overflow: hidden;
  background: #333;
}

.clipped-tools {
  height: 15px;
}

.clipped-tools svg {
  width: 300px;
  height: 15px;
}

.heading {
  display: flex;
  align-items: center;
  justify-content: space-between;
  height: 14px;
  padding: 0 3px 0 4px;
  background: linear-gradient(#d0cdc4, #aaa79d);
  color: #000;
}

.heading h2 {
  margin: 0;
  font-size: 11px;
  line-height: 14px;
}

.x {
  display: flex;
  align-items: center;
  justify-content: center;
  width: 12px;
  height: 12px;
  border: 1px solid #8b7570;
  background: #cdc6bd;
}

.x svg {
  width: 8px;
  height: 8px;
  stroke: #b0403a;
  fill: none;
}

.tall-heading {
  height: 26px;
  padding-left: 0;
  padding-right: 4px;
  justify-content: flex-start;
}

.tall-heading h2 {
  align-self: stretch;
  width: 122px;
  padding-left: 5px;
  border-right: 1px solid #777;
}

.tall-heading .x {
  width: 14px;
  height: 14px;
  margin-left: auto;
}

.heading-icon {
  width: 25px;
  height: 26px;
}

.tool {
  display: flex;
  align-items: center;
  justify-content: center;
  width: 22px;
  height: 22px;
  flex: none;
  border: 1px solid #777;
  border-right-color: #999;
  border-bottom-color: #999;
  background: #444;
}

.tool svg {
  width: 20px;
  height: 20px;
}

.tool.on {
  border-color: #b9cdf8;
  background: #6f95ee;
}

.tool.bare,
.tool.flat {
  border-color: transparent;
  background: none;
}

.tool.flat {
  width: 24px;
}

.tool.flat svg {
  width: 22px;
  height: 22px;
}

.tool.flat.on {
  background: #5474b8;
}

.toggle {
  display: flex;
  align-items: center;
  justify-content: center;
  border: 1px solid #c5d4fa;
  background: #7096ef;
}

.toggle::after {
  content: "";
  width: 2px;
  height: 8px;
  background: #101a50;
}

.display {
  display: flex;
  height: 48px;
  gap: 2px;
  padding: 4px 2px 1px 0;
  background: #444;
}

.display-col {
  position: relative;
  display: flex;
  flex-direction: column;
  justify-content: space-between;
  width: 122px;
}

.display-col.wide {
  width: 155px;
}

.display-col::after {
  content: "";
  position: absolute;
  right: 7px;
  bottom: 7px;
  width: 4px;
  height: 4px;
  border: solid #777;
  border-width: 0 1px 1px 0;
  transform: rotate(45deg);
}

.display-icons {
  display: flex;
  gap: 2px;
  padding-left: 3px;
}

.display-icons.spheres {
  gap: 0;
  padding-left: 1px;
}

.tool.gap {
  margin-left: 3px;
  border-color: #333;
}

select {
  appearance: none;
  width: 100%;
  height: 17px;
  padding: 0 4px;
  border: 1px solid #777;
  border-radius: 0;
  background: #222;
  color: #999;
  font: 10px "Liberation Sans", sans-serif;
}

.toggle.tall {
  width: 17px;
}

.snaps {
  display: flex;
  gap: 4px;
  height: 28px;
  padding: 3px 5px 3px 2px;
}

.toggle.big {
  flex: 1;
  margin-left: 8px;
}

.toggle.big::after {
  width: 16px;
  height: 15px;
  border: 1px solid #3552a0;
  background: linear-gradient(#101a50, #101a50) center / 2px 9px no-repeat;
}

.grid-snaps {
  display: flex;
  align-items: center;
  gap: 3px;
  height: 34px;
  padding-left: 3px;
  background: #555;
}

.tool-group {
  display: flex;
  outline: 1px solid #111;
}

.grid-snaps .tool {
  width: 24px;
  height: 24px;
}

.grid-snaps .tool svg {
  width: 22px;
  height: 22px;
}

.steps {
  display: flex;
  margin-left: 3px;
}

.steps button {
  width: 28px;
  height: 16px;
  border: 1px solid #222;
  border-bottom-color: #999;
  color: #aaa;
}

.steps .on {
  background: #5877c0;
}

.info-row {
  display: flex;
  justify-content: space-between;
  height: 30px;
  padding-right: 2px;
}

.info-left {
  display: flex;
  align-items: center;
  gap: 1px;
  padding-left: 3px;
}

.info-left .tool {
  width: 24px;
}

.info-right {
  display: flex;
  align-items: center;
  justify-content: space-between;
  width: 106px;
  padding: 0 2px;
}

.info-right.lit {
  height: 28px;
  background: #555;
}

.info-right .tool {
  width: 24px;
  height: 24px;
}

.info-right .tool svg,
.info-left .tool svg {
  width: 22px;
  height: 22px;
}

/* Layers */
.layers {
  padding: 5px 0 0 2px;
}

.layer-block {
  display: flex;
  margin-bottom: 5px;
}

.layer-block.lights,
.layer-block:last-child {
  margin-bottom: 2px;
}

.layer-col {
  display: flex;
  gap: 2px;
  width: 150px;
}

.layer {
  display: flex;
  align-items: center;
  width: 134px;
  height: 16px;
}

.layer-name {
  width: 49px;
  height: 15px;
  margin-right: 2px;
  padding-left: 2px;
  border-bottom: 1px solid #111;
  line-height: 13px;
  white-space: nowrap;
}

.layer-name.selected {
  height: 13px;
  background: #6f95ee;
  color: #cfe0ff;
}

.layer-controls {
  display: flex;
  width: 83px;
  height: 15px;
  border: 1px solid #111;
  border-bottom-color: #ccc;
  border-right-color: #ccc;
}

.play {
  display: flex;
  align-items: center;
  justify-content: center;
  width: 15px;
  background: #555;
}

.play::after {
  content: "";
  border: 4px solid transparent;
  border-left-color: #fff;
  border-right-width: 0;
}

.swatch {
  width: 23px;
  border: 1px solid rgba(0, 0, 0, 0.3);
  border-bottom-color: #ddd;
}

.swatch.white {
  background: #fff;
}

.lock {
  width: 17px;
  padding-left: 3px;
  border: 1px solid #222;
  border-width: 0 1px;
  background: #555;
}

.lock svg {
  width: 10px;
  height: 12px;
  fill: none;
  stroke: #bbb;
}

.layer-controls .toggle {
  flex: 1;
}

.layer-bar {
  width: 6px;
  border: 1px solid #333;
  border-right-color: #b9cdf8;
  background: #6286d8;
}

.visibility {
  display: flex;
  gap: 10px;
  margin-left: 28px;
}

.visibility button {
  display: flex;
  align-items: center;
  justify-content: space-between;
  width: 54px;
  height: 15px;
  padding: 0 2px;
  border: 1px solid #999;
  background: #444;
  font-size: 10px;
}

.visibility button:last-child {
  width: 58px;
}

.visibility svg {
  width: 20px;
  height: 10px;
}

.fold {
  display: flex;
  align-items: center;
  justify-content: center;
  height: 19px;
  margin: 0 37px;
  background: linear-gradient(#888, #888) center / 100% 1px no-repeat;
}

.fold svg {
  width: 12px;
  height: 12px;
}

/* Metal weights */
.metals {
  display: flex;
  flex-direction: column;
  padding: 8px 6px 10px;
}

.library {
  display: flex;
  align-items: center;
  gap: 4px;
  height: 18px;
  margin-bottom: 7px;
  padding: 0 3px 0 6px;
  color: #aaa;
  font-size: 10px;
}

.library span {
  margin-right: auto;
}

.library button {
  display: flex;
  align-items: center;
  justify-content: space-between;
  width: 37px;
  height: 17px;
  padding: 0 1px 0 3px;
  border: 1px solid #888;
  color: #888;
  font-family: "Liberation Sans", sans-serif;
}

.library button:last-child {
  width: 45px;
}

.library b {
  width: 13px;
  height: 13px;
  background: #4fa6a6;
  color: #000;
  line-height: 13px;
  text-align: center;
}

.metal-list {
  display: flex;
  height: 217px;
  margin-bottom: 6px;
  overflow: hidden;
}

.metal-list table {
  flex: 1;
  height: max-content;
  border-spacing: 0;
  table-layout: fixed;
  background: #222;
}

.metal-list th,
.metal-list td {
  height: 17px;
  padding: 0 6px;
  border-right: 1px solid #eee;
  border-bottom: 1px solid #eee;
  line-height: 16px;
  text-align: left;
  white-space: nowrap;
}

.metal-list th {
  height: 24px;
  border-color: #ddd;
  background: #fff;
  color: #222;
  font-weight: normal;
}

.metal-list th:nth-child(1) {
  width: 151px;
}

.metal-list th:nth-child(2) {
  width: 50px;
}

.metal-list th:nth-child(3) {
  width: 60px;
}

.metal-list th:last-child,
.metal-list td:last-child {
  padding: 0;
  border-right: 0;
}

.scroll {
  display: flex;
  flex-direction: column;
  align-items: center;
  width: 17px;
  padding: 6px 0 5px;
  background: #f0f0f0;
}

.scroll svg,
.command-arrows svg {
  width: 9px;
  height: 6px;
  fill: none;
  stroke: #555;
  stroke-width: 2;
}

.thumb {
  width: 15px;
  height: 30px;
  margin: 5px 0 auto;
  background: #ccc;
}

.field-button {
  display: flex;
  align-items: center;
  justify-content: space-between;
  height: 17px;
  padding: 0 1px 0 2px;
  border: 1px solid #888;
  background: #292725;
  color: #999;
  font: 10px "Liberation Sans", sans-serif;
}

.materials {
  align-self: flex-end;
  width: 130px;
  margin-right: 11px;
}

.materials i {
  width: 13px;
  height: 13px;
  background: #555;
  font-style: normal;
  line-height: 13px;
  text-align: center;
}

.hint {
  margin: 12px 0 15px;
  color: #f1d138;
  font: bold 12px/13px "Liberation Sans", sans-serif;
  text-align: center;
}

.calculate {
  align-self: center;
  width: 100px;
}

.go {
  display: flex;
  align-items: center;
  justify-content: center;
  width: 14px;
  height: 14px;
  border: 1px solid #2c7a18;
  background: #3f9a20;
}

.go::after {
  content: "";
  border: 4px solid transparent;
  border-left-color: #e4ffd8;
  border-right-width: 0;
}

/* Gem reporter */
.totals {
  display: flex;
  gap: 4px;
  padding: 4px 5px 0 4px;
}

.totals div {
  display: flex;
  flex: 1 1 146px;
  height: 17px;
  border: 1px solid #777;
  border-left-color: #111;
}

.totals div:last-child {
  flex-basis: 140px;
}

.totals span {
  padding: 0 5px 0 3px;
  line-height: 14px;
  white-space: nowrap;
}

.totals output {
  flex: 1;
  background: #000;
  color: #5fd5e5;
  font: 12px/16px "Liberation Sans", sans-serif;
  text-align: center;
}

.gem-actions {
  display: flex;
  gap: 22px;
  margin: 0 0 3px 42px;
}

.gem-actions button {
  display: flex;
  align-items: center;
  justify-content: space-between;
  width: 69px;
  height: 16px;
  padding-left: 2px;
  border: 1px solid #111;
}

.gem-actions .save {
  width: 124px;
}

.report {
  display: flex;
  align-items: flex-start;
  height: 160px;
  margin: 0 7px 0 2px;
  padding: 6px 7px;
  border: 1px solid #777;
  background: #555;
}

.gem-thumb {
  width: 35px;
  height: 33px;
}

.report table {
  width: 222px;
  border-collapse: collapse;
  background: #3b3b3b;
}

.report th,
.report td {
  height: 16px;
  padding: 0;
  border: 1px solid #888;
  font-weight: normal;
  line-height: 14px;
  text-align: center;
}

.report td:nth-child(2) {
  width: 36px;
}

.report td:nth-child(3) {
  width: 49px;
}

.report td:nth-child(4) {
  width: 16px;
}

/* Workspace */
.workspace {
  display: flex;
  flex: 1;
  flex-direction: column;
  min-width: 0;
  padding: 7px 0 0;
  border: solid #aeb0b1;
  border-width: 0 8px 9px 8px;
  background: #add8e6;
  box-shadow: inset 0 7px #aeb0b1;
}

.command {
  display: flex;
  height: 62px;
  flex: none;
  margin-top: 3px;
  padding-left: 2px;
  border-left: 1px solid #567;
}

.command-text {
  flex: 1;
  padding-top: 1px;
  border-left: 1px solid #567;
  background: #3cb8e2;
  color: #103248;
  font: 13px/16px "Liberation Sans", sans-serif;
}

.command-text p {
  margin: 0;
  padding-left: 3px;
}

.prompt {
  display: flex;
  align-items: center;
  gap: 5px;
  height: 18px;
  margin-top: 9px;
  padding-left: 3px;
  border-top: 1px solid #123;
  font-weight: bold;
}

.prompt input {
  flex: 1;
  height: 16px;
  padding: 0;
  border: 0;
  border-left: 1px solid #777;
  background: none;
}

.command-scroll {
  width: 17px;
  background: #f0f0f0;
}

.command-arrows {
  display: flex;
  flex-direction: column;
  align-items: center;
  justify-content: space-between;
  height: 43px;
  padding: 6px 0;
}

.command-scroll button {
  display: flex;
  align-items: center;
  justify-content: center;
  width: 15px;
  height: 9px;
  margin: 0 1px;
  border: 1px solid #999;
}

.command-scroll button svg {
  width: 7px;
  height: 4px;
}

.tabs {
  display: flex;
  height: 27px;
  flex: none;
  align-items: flex-start;
  padding: 6px 0 0 1px;
  color: #111;
  font: 11px "Liberation Sans", sans-serif;
}

.tabs button {
  display: grid;
  place-items: center;
}

.tabs svg,
.tabs span {
  grid-area: 1 / 1;
}

.tabs path {
  fill: #e3e9eb;
  stroke: #333;
}

.tabs .active path {
  fill: #3cb8e2;
}

.tabs .plus {
  width: 9px;
  height: 9px;
}

.viewport {
  position: relative;
  flex: 1;
  min-height: 0;
  background: #000;
}

.scene {
  width: 100%;
  height: 100%;
}

.view-label {
  position: absolute;
  top: 0;
  left: 0;
  display: flex;
  align-items: center;
  height: 18px;
  padding-left: 10px;
  background: #3cb8e2;
  color: #103248;
  font: 11px "Liberation Sans", sans-serif;
}

.view-label span {
  display: flex;
  align-items: center;
  height: 100%;
  margin-left: 10px;
  padding: 0 1px;
  border-left: 1px solid #123;
}

.view-label svg {
  width: 7px;
  height: 5px;
}

.dims {
  fill: none;
  stroke: #fff;
}

.dims .arrow {
  fill: #fff;
  stroke: none;
}

.dims text {
  fill: #fff;
  stroke-width: 1px;
  font: 68px "Liberation Sans", sans-serif;
  text-anchor: middle;
}

.axis {
  font: 13px "Liberation Sans", sans-serif;
}

/* Taskbar */
.taskbar {
  display: flex;
  justify-content: space-between;
  height: 40px;
  flex: none;
  background: linear-gradient(90deg, #223640, #22353f 60%, #1c2b43 85%, #1b2740);
  color: #fff;
  font-family: "Open Sans", sans-serif;
}

.pinned {
  display: flex;
}

.pinned button {
  display: flex;
  align-items: center;
  justify-content: center;
  width: 49px;
}

.pinned svg {
  width: 24px;
  height: 24px;
}

.pinned .running {
  border-bottom: 2px solid #a9cdf0;
  background: #4b616c;
}

.tray {
  display: flex;
  align-items: center;
  padding-right: 23px;
}

.desktop {
  margin-right: 7px;
}

.more {
  margin-bottom: 20px;
  font-size: 16px;
  line-height: 16px;
}

.people {
  width: 15px;
  height: 16px;
  margin: 0 60px 0 23px;
  fill: none;
  stroke: #fff;
}

.weather {
  display: flex;
  align-items: center;
  gap: 9px;
  margin-right: 14px;
  font-size: 13px;
}

.weather svg {
  width: 26px;
  height: 26px;
}

.status {
  display: flex;
  align-items: center;
  gap: 7px;
  margin-right: 11px;
}

.status svg {
  width: 18px;
  height: 18px;
  fill: none;
  stroke: #fff;
}

.status .keyboard {
  width: 24px;
  height: 14px;
  margin-left: 4px;
}

.clock {
  display: flex;
  flex-direction: column;
  gap: 3px;
  align-items: center;
  margin-right: 18px;
  line-height: 15px;
}

.notify {
  position: relative;
}

.notify svg {
  width: 18px;
  height: 16px;
}

.notify span {
  position: absolute;
  top: 5px;
  left: 7px;
  width: 16px;
  height: 16px;
  border: 1px solid #999;
  border-radius: 50%;
  background: #2a2f38;
  font-size: 10px;
  line-height: 14px;
}
</style>
